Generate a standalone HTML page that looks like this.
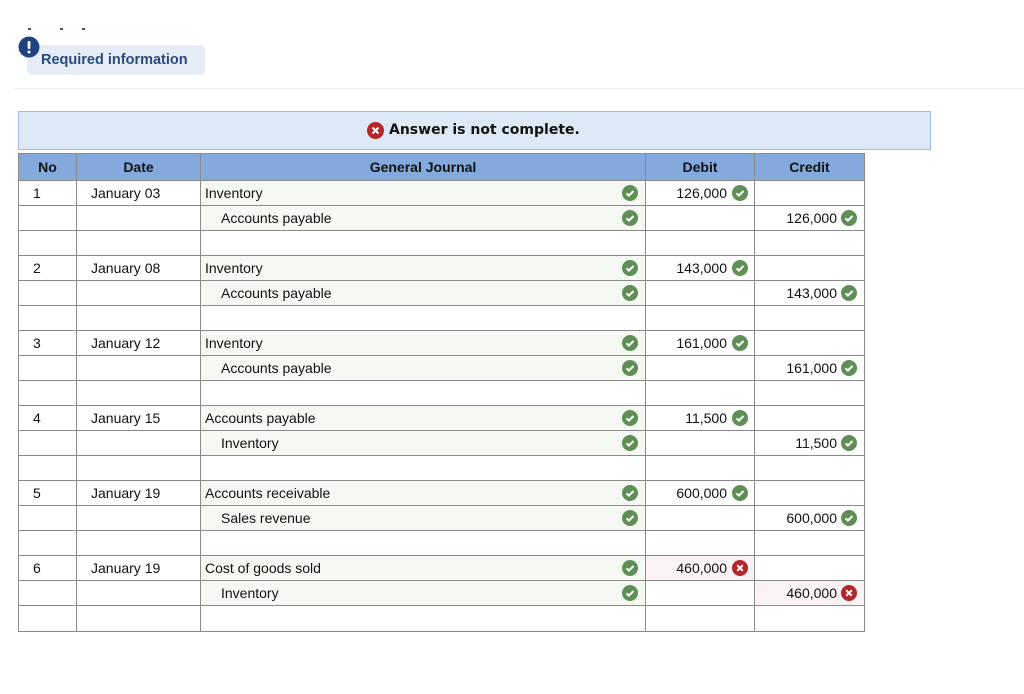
<!DOCTYPE html>
<html><head><meta charset="utf-8"><style>
body{margin:0;background:#fff;font-family:"Liberation Sans",Arial,sans-serif;width:1024px;height:694px;position:relative;overflow:hidden}
.ab{position:absolute}
table{position:absolute;left:18px;top:153px;border-collapse:collapse;table-layout:fixed;font-size:14px;color:#111}
td,th{border:1px solid #8a8a8a;height:24px;padding:0;position:relative}
th{background:#84a9dc;height:26px;font-weight:bold;font-size:14px}
td.g{background:#f6f8f3}
td.e{background:#fbf3f3}
.in{padding-left:20px}
.l{padding-left:4px}
.ic{position:absolute;top:4px}
.r{text-align:right}
.n{padding-left:14px}
.d{padding-left:14px}
</style></head><body>
<div class="ab" style="left:28px;top:28px;width:3px;height:2px;background:#555"></div>
<div class="ab" style="left:60px;top:28px;width:3px;height:2px;background:#555"></div>
<div class="ab" style="left:82px;top:28px;width:3px;height:2px;background:#555"></div>
<div class="ab" style="left:27px;top:45px;width:178px;height:30px;background:#e6edf6;border-radius:5px"></div>
<div class="ab" style="left:41px;top:52px;font-size:14.5px;font-weight:bold;color:#2a4a7f">Required information</div>
<svg class="ab" style="left:18px;top:36px" width="22" height="22"><circle cx="11" cy="11" r="10.5" fill="#1f4380"/><rect x="9.6" y="5" width="2.8" height="8" rx="1.2" fill="#fff"/><circle cx="11" cy="16" r="1.5" fill="#fff"/></svg>
<div class="ab" style="left:14px;top:88px;width:1010px;height:1px;background:#eee"></div>
<div class="ab" style="left:18px;top:111px;width:911px;height:37px;background:#dde9f7;border:1px solid #9dbbe3"></div>
<svg class="ab" style="left:367px;top:122px" width="17" height="17"><circle cx="8.5" cy="8.5" r="8.5" fill="#b3262a"/><path d="M5.5 5.5l6 6M11.5 5.5l-6 6" stroke="#fff" stroke-width="2"/></svg>
<div class="ab" style="left:389px;top:122px;font-family:'DejaVu Sans',Verdana,sans-serif;font-weight:bold;font-size:14px;color:#111">Answer is not complete.</div>
<svg width="0" height="0" style="position:absolute"><defs>
<g id="ok"><circle cx="8" cy="8" r="8" fill="#5f8f57"/><path d="M4.5 8.3l2.4 2.3 4.6-4.6" stroke="#fff" stroke-width="2" fill="none"/></g>
<g id="no"><circle cx="8" cy="8" r="8" fill="#b3262a"/><path d="M5.2 5.2l5.6 5.6M10.8 5.2l-5.6 5.6" stroke="#fff" stroke-width="2"/></g>
</defs></svg>
<table>
<colgroup><col style="width:58px"><col style="width:124px"><col style="width:445px"><col style="width:109px"><col style="width:110px"></colgroup>
<tr><th>No</th><th>Date</th><th>General Journal</th><th>Debit</th><th>Credit</th></tr>
<tr><td class="n">1</td><td class="d">January 03</td><td class="g l">Inventory<svg class="ic" style="left:421px" width="16" height="16"><use href="#ok"/></svg></td><td class="r" style="padding-right:27px">126,000<svg class="ic" style="left:86px" width="16" height="16"><use href="#ok"/></svg></td><td></td></tr>
<tr><td></td><td></td><td class="g in">Accounts payable<svg class="ic" style="left:421px" width="16" height="16"><use href="#ok"/></svg></td><td></td><td class="r" style="padding-right:27px">126,000<svg class="ic" style="left:86px" width="16" height="16"><use href="#ok"/></svg></td></tr>
<tr><td></td><td></td><td></td><td></td><td></td></tr>
<tr><td class="n">2</td><td class="d">January 08</td><td class="g l">Inventory<svg class="ic" style="left:421px" width="16" height="16"><use href="#ok"/></svg></td><td class="r" style="padding-right:27px">143,000<svg class="ic" style="left:86px" width="16" height="16"><use href="#ok"/></svg></td><td></td></tr>
<tr><td></td><td></td><td class="g in">Accounts payable<svg class="ic" style="left:421px" width="16" height="16"><use href="#ok"/></svg></td><td></td><td class="r" style="padding-right:27px">143,000<svg class="ic" style="left:86px" width="16" height="16"><use href="#ok"/></svg></td></tr>
<tr><td></td><td></td><td></td><td></td><td></td></tr>
<tr><td class="n">3</td><td class="d">January 12</td><td class="g l">Inventory<svg class="ic" style="left:421px" width="16" height="16"><use href="#ok"/></svg></td><td class="r" style="padding-right:27px">161,000<svg class="ic" style="left:86px" width="16" height="16"><use href="#ok"/></svg></td><td></td></tr>
<tr><td></td><td></td><td class="g in">Accounts payable<svg class="ic" style="left:421px" width="16" height="16"><use href="#ok"/></svg></td><td></td><td class="r" style="padding-right:27px">161,000<svg class="ic" style="left:86px" width="16" height="16"><use href="#ok"/></svg></td></tr>
<tr><td></td><td></td><td></td><td></td><td></td></tr>
<tr><td class="n">4</td><td class="d">January 15</td><td class="g l">Accounts payable<svg class="ic" style="left:421px" width="16" height="16"><use href="#ok"/></svg></td><td class="r" style="padding-right:27px">11,500<svg class="ic" style="left:86px" width="16" height="16"><use href="#ok"/></svg></td><td></td></tr>
<tr><td></td><td></td><td class="g in">Inventory<svg class="ic" style="left:421px" width="16" height="16"><use href="#ok"/></svg></td><td></td><td class="r" style="padding-right:27px">11,500<svg class="ic" style="left:86px" width="16" height="16"><use href="#ok"/></svg></td></tr>
<tr><td></td><td></td><td></td><td></td><td></td></tr>
<tr><td class="n">5</td><td class="d">January 19</td><td class="g l">Accounts receivable<svg class="ic" style="left:421px" width="16" height="16"><use href="#ok"/></svg></td><td class="r" style="padding-right:27px">600,000<svg class="ic" style="left:86px" width="16" height="16"><use href="#ok"/></svg></td><td></td></tr>
<tr><td></td><td></td><td class="g in">Sales revenue<svg class="ic" style="left:421px" width="16" height="16"><use href="#ok"/></svg></td><td></td><td class="r" style="padding-right:27px">600,000<svg class="ic" style="left:86px" width="16" height="16"><use href="#ok"/></svg></td></tr>
<tr><td></td><td></td><td></td><td></td><td></td></tr>
<tr><td class="n">6</td><td class="d">January 19</td><td class="g l">Cost of goods sold<svg class="ic" style="left:421px" width="16" height="16"><use href="#ok"/></svg></td><td class="r e" style="padding-right:27px">460,000<svg class="ic" style="left:86px" width="16" height="16"><use href="#no"/></svg></td><td></td></tr>
<tr><td></td><td></td><td class="g in">Inventory<svg class="ic" style="left:421px" width="16" height="16"><use href="#ok"/></svg></td><td></td><td class="r e" style="padding-right:27px">460,000<svg class="ic" style="left:86px" width="16" height="16"><use href="#no"/></svg></td></tr>
<tr><td></td><td></td><td></td><td></td><td style="height:25px"></td></tr>
</table>
</body></html>
